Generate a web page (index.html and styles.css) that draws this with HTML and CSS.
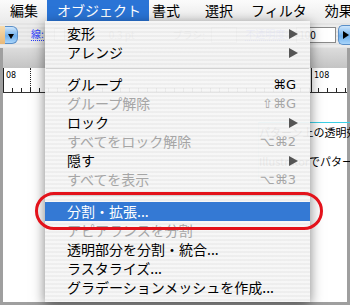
FILE: index.html
```html
<!DOCTYPE html>
<html lang="ja">
<head>
    <meta charset="UTF-8">
    <meta name="viewport" content="width=device-width, initial-scale=1.0">
    <title>オブジェクト メニュー</title>
    <link rel="stylesheet" href="styles.css">
</head>
<body>
    <div class="screen">
        <div class="menubar">
            <span class="mb-item">編集</span>
            <span class="mb-item active">オブジェクト</span>
            <span class="mb-item">書式</span>
            <span class="mb-item">選択</span>
            <span class="mb-item">フィルタ</span>
            <span class="mb-item">効果</span>
        </div>

        <div class="toolbar">
            <div class="style-picker"><span class="swatch"></span><span class="picker-btn"></span></div>
            <span class="tb-link">線:</span>
            <span class="tb-box"></span>
            <span class="tb-text">0.3 pt</span>
            <span class="tb-text brush">ブラシ:</span>
            <span class="tb-select"></span>
            <span class="tb-link opacity">不透明度:</span>
            <span class="tb-input">100</span>
            <span class="tb-arrow"></span>
        </div>

        <div class="doc">
            <div class="doc-band"></div>
            <div class="ruler">
                <span class="ruler-mark first">08</span>
                <span class="ruler-mark">108</span>
                <span class="ruler-guide"></span>
            </div>
            <div class="canvas">
                <div class="text-frame">
                    <p>パターン上の透明効果</p>
                    <p class="second">Illustratorでパターン</p>
                </div>
            </div>
        </div>

        <!-- dropdown -->
        <div class="menu">
            <div class="menu-item">変形<span class="submenu"></span></div>
            <div class="menu-item">アレンジ<span class="submenu"></span></div>
            <div class="menu-sep"></div>
            <div class="menu-item">グループ<span class="key">⌘G</span></div>
            <div class="menu-item disabled">グループ解除<span class="key">⇧⌘G</span></div>
            <div class="menu-item">ロック<span class="submenu"></span></div>
            <div class="menu-item disabled">すべてをロック解除<span class="key">⌥⌘2</span></div>
            <div class="menu-item">隠す<span class="submenu"></span></div>
            <div class="menu-item disabled">すべてを表示<span class="key">⌥⌘3</span></div>
            <div class="menu-sep"></div>
            <div class="menu-item selected">分割・拡張...</div>
            <div class="menu-item disabled">アピアランスを分割</div>
            <div class="menu-item">透明部分を分割・統合...</div>
            <div class="menu-item">ラスタライズ...</div>
            <div class="menu-item">グラデーションメッシュを作成...</div>
        </div>

        <div class="callout"></div>
    </div>
</body>
</html>
```

FILE: styles.css
```css
body {
    margin: 0;
    background-color: #ffffff;
    font-family: "Noto Sans CJK JP", "DejaVu Sans", sans-serif;
}
.screen {
    position: relative;
    width: 350px;
    height: 305px;
    overflow: hidden;
    display: flex;
    flex-direction: column;
}

/* menubar */
.menubar {
    display: flex;
    height: 21px;
    flex-shrink: 0;
    background: linear-gradient(#fbfbfb, #ececec);
    font-size: 14px;
    line-height: 21px;
    color: #000;
    padding-left: 1px;
}
.mb-item {
    padding: 0 9px;
    white-space: nowrap;
}
.mb-item.active {
    background-color: #2a74d6;
    color: #fff;
    padding: 0 8px 0 10px;
}
.mb-item.active + .mb-item {
    padding-left: 3px;
    padding-right: 16px;
}

/* toolbar */
.toolbar {
    display: flex;
    align-items: center;
    height: 27px;
    flex-shrink: 0;
    background: repeating-linear-gradient(#ececec 0 2px, #e4e4e4 2px 4px);
    font-size: 10px;
    white-space: nowrap;
}
.style-picker {
    display: flex;
    height: 18px;
}
.swatch {
    width: 5px;
    background: linear-gradient(#f6dcb0, #e8b878);
}
.picker-btn {
    position: relative;
    width: 12px;
    border-radius: 0 6px 6px 0;
    background: linear-gradient(#cfe6fb, #6fb0ee 55%, #a8d4fa);
    border: 1px solid #5a8fc8;
    border-left: none;
}
.picker-btn::after {
    content: "";
    position: absolute;
    left: 3px;
    top: 7px;
    border-top: 5px solid #000;
    border-left: 3px solid transparent;
    border-right: 3px solid transparent;
}
.tb-link {
    margin-left: 13px;
    color: #2a3cff;
    border-bottom: 1px dotted #2a3cff;
    line-height: 12px;
}
.tb-box {
    margin-left: 10px;
    width: 11px;
    height: 11px;
    border: 1px solid #888;
    background-color: #fff;
}
.tb-text {
    margin-left: 44px;
    color: #555;
}
.tb-text.brush {
    margin-left: 38px;
}
.tb-select {
    margin-left: 6px;
    width: 30px;
    height: 14px;
    border: 1px solid #999;
    background-color: #f6f6f6;
}
.tb-link.opacity {
    margin-left: 8px;
}
.tb-input {
    margin-left: 8px;
    width: 44px;
    height: 14px;
    border: 1px solid #8a8a8a;
    background-color: #fff;
    line-height: 14px;
    padding-left: 2px;
}
.tb-arrow {
    position: relative;
    margin-left: 2px;
    width: 14px;
    height: 18px;
    background: linear-gradient(#cfe6fb, #6fb0ee 55%, #a8d4fa);
    border: 1px solid #5a8fc8;
    border-right: none;
    border-radius: 5px 0 0 5px;
}
.tb-arrow::after {
    content: "";
    position: absolute;
    left: 4px;
    top: 5px;
    border-left: 6px solid #000;
    border-top: 4px solid transparent;
    border-bottom: 4px solid transparent;
}

/* document window */
.doc {
    flex: 1;
    display: flex;
    flex-direction: column;
    border: 3px solid #9f9f9f;
    border-top: none;
}
.doc-band {
    height: 20px;
    flex-shrink: 0;
    background: linear-gradient(#dcdcdc, #c4c4c4);
}
.ruler {
    position: relative;
    display: flex;
    height: 24px;
    flex-shrink: 0;
    border-bottom: 1px solid #333;
    background:
        repeating-linear-gradient(to right, #222 0 1px, transparent 1px 9px) left bottom / 100% 4px no-repeat,
        #fff;
    font-family: "DejaVu Sans", sans-serif;
    font-size: 8px;
    line-height: 12px;
}
.ruler-mark {
    padding: 2px 0 0 2px;
    border-left: 1px solid #222;
    color: #000;
}
.ruler-mark.first {
    width: 305px;
}
.ruler-guide {
    position: absolute;
    left: 27px;
    top: 0;
    bottom: 0;
    border-left: 1px dotted #222;
}
.canvas {
    position: relative;
    flex: 1;
    background-color: #fff;
}
.text-frame {
    position: absolute;
    left: 255px;
    top: 29px;
    width: 120px;
    height: 60px;
    border-top: 1px solid #3cd0e6;
    border-left: 1px solid #bde9f1;
    font-size: 11px;
    line-height: 16px;
    color: #000;
    white-space: nowrap;
}
.text-frame p {
    margin: 1px 0 0 0;
}
.text-frame p.second {
    margin-top: 13px;
}

/* dropdown menu */
.menu {
    position: absolute;
    left: 45px;
    top: 21px;
    width: 265px;
    height: 281px;
    padding-top: 3px;
    box-sizing: border-box;
    background: repeating-linear-gradient(rgba(246, 246, 246, 0.95) 0 2px, rgba(237, 237, 237, 0.95) 2px 4px);
    box-shadow: 0 3px 12px rgba(0, 0, 0, 0.5);
    font-size: 14px;
    color: #000;
}
.menu-item {
    display: flex;
    justify-content: space-between;
    align-items: center;
    height: 19px;
    line-height: 19px;
    padding: 0 14px 0 22px;
    white-space: nowrap;
}
.menu-item.disabled {
    color: #a6a6a6;
}
.menu-item.selected {
    background-color: #3479d4;
    color: #fff;
}
.key {
    font-family: "DejaVu Sans", sans-serif;
    font-size: 13px;
}
.submenu {
    width: 0;
    height: 0;
    margin-right: -2px;
    border-left: 9px solid #555;
    border-top: 5px solid transparent;
    border-bottom: 5px solid transparent;
}
.menu-sep {
    height: 13px;
    position: relative;
}
.menu-sep::after {
    content: "";
    position: absolute;
    left: 1px;
    right: 1px;
    top: 6px;
    border-top: 1px solid #d2d2d2;
}

/* red highlight ring */
.callout {
    position: absolute;
    left: 35px;
    top: 192px;
    width: 288px;
    height: 38px;
    box-sizing: border-box;
    border: 3px solid #e3121b;
    border-radius: 19px;
}
```
